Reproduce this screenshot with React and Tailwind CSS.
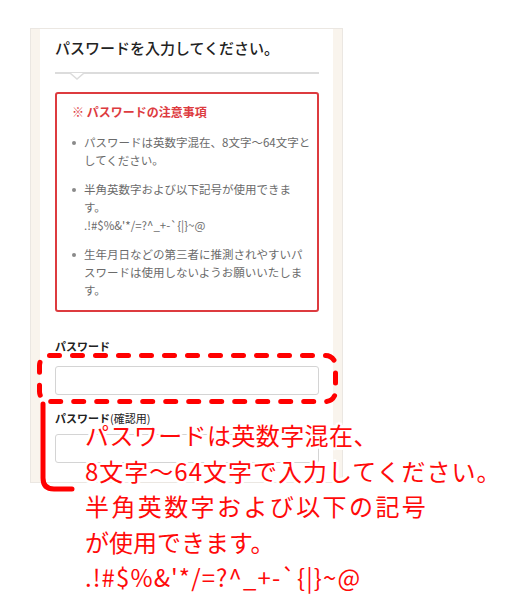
import React from 'react';

const HALO =
  '[text-shadow:2px_0_0_#fff,-2px_0_0_#fff,0_2px_0_#fff,0_-2px_0_#fff,2px_2px_0_#fff,-2px_-2px_0_#fff,2px_-2px_0_#fff,-2px_2px_0_#fff,3px_0_0_#fff,-3px_0_0_#fff,0_3px_0_#fff,0_-3px_0_#fff]';

function Bullet({ lines }) {
  return (
    <li className="flex">
      <span className="w-[12px] shrink-0 flex pt-[8px]">
        <span className="block w-[4px] h-[4px] rounded-full bg-[#8a8a8a]" />
      </span>
      <span className="block whitespace-nowrap">
        {lines.map((l, i) => (
          <span key={i} className="block">{l}</span>
        ))}
      </span>
    </li>
  );
}

function Notes() {
  return (
    <div className="mt-[12px] border-2 border-[#dd3b3f] rounded-[3px] pl-[15px] pr-[9px] pt-[9px] pb-[11px]">
      <p className="text-[12px] leading-[18px] font-bold text-[#dd3b3f]">※ パスワードの注意事項</p>
      <ul className="mt-[12px] flex flex-col gap-[11px] text-[11.5px] leading-[18px] text-[#6b6b6b]">
        <Bullet lines={['パスワードは英数字混在、8文字〜64文字と', 'してください。']} />
        <Bullet lines={['半角英数字および以下記号が使用できま', 'す。', ".!#$%&'*/=?^_+-`{|}~@"]} />
        <Bullet lines={['生年月日などの第三者に推測されやすいパ', 'スワードは使用しないようお願いいたしま', 'す。']} />
      </ul>
    </div>
  );
}

function Field({ label, sub, className = '', gap = 'mt-[13px]' }) {
  return (
    <div className={className}>
      <p className="text-[11px] leading-[14px] font-bold text-[#222]">
        {label}
        {sub && <span className="font-normal">{sub}</span>}
      </p>
      <div className={`${gap} h-[29px] border border-[#d4d4d4] rounded-[3px] bg-white`} />
    </div>
  );
}

export default function App() {
  return (
    <div
      className="relative w-[506px] h-[607px] bg-white overflow-hidden"
      style={{ fontFamily: '"Noto Sans CJK JP", "Noto Sans", sans-serif' }}
    >
      <div className="ml-[30px] pt-[28px] w-[313px]">
        <div className="h-[455px] border border-[#ebe7e2] bg-[#f9f4ed] px-[9px]">
          <div className="h-full bg-white pl-[15px] pr-[14px] pt-[8px]">
            <h1 className="text-[15px] leading-[22px] font-medium text-[#222]">パスワードを入力してください。</h1>
            <div className="mt-[13px] relative h-[8px]">
              <div className="h-[2px] bg-[#dcdcdc]" />
              <svg className="absolute left-[15px] top-0" width="14" height="8" viewBox="0 0 14 8">
                <path d="M0 1 L7 7 L14 1" fill="#fff" stroke="#dcdcdc" strokeWidth="1.5" />
              </svg>
            </div>
            <Notes />
            <Field label="パスワード" className="mt-[27px]" />
            <Field label="パスワード" sub="(確認用)" className="mt-[16px]" gap="mt-[9px]" />
          </div>
        </div>
      </div>

      <svg className="absolute inset-0 pointer-events-none" width="506" height="607" viewBox="0 0 506 607">
        <rect
          x="39.5"
          y="355.5"
          width="296"
          height="46"
          rx="10"
          fill="none"
          stroke="#ff0000"
          strokeWidth="5"
          strokeDasharray="10 13"
          strokeLinecap="round"
        />
        <path d="M43 404 L43 478 Q43 489 54 489 L72 489" fill="none" stroke="#ff0000" strokeWidth="5" strokeLinecap="round" />
      </svg>

      <div className={`absolute left-[85px] top-[417px] text-[24px] leading-[35.5px] text-[#ff0a0a] whitespace-nowrap ${HALO}`}>
        <p className="tracking-[0.4px]">パスワードは英数字混在、</p>
        <p className="tracking-[1px]">8文字〜64文字で入力してください。</p>
        <p className="tracking-[2.4px]">半角英数字および以下の記号</p>
        <p>が使用できます。</p>
        <p className="tracking-[1.1px]">.!#$%&amp;'*/=?^_+-`{'{'}|{'}'}~@</p>
      </div>
    </div>
  );
}
